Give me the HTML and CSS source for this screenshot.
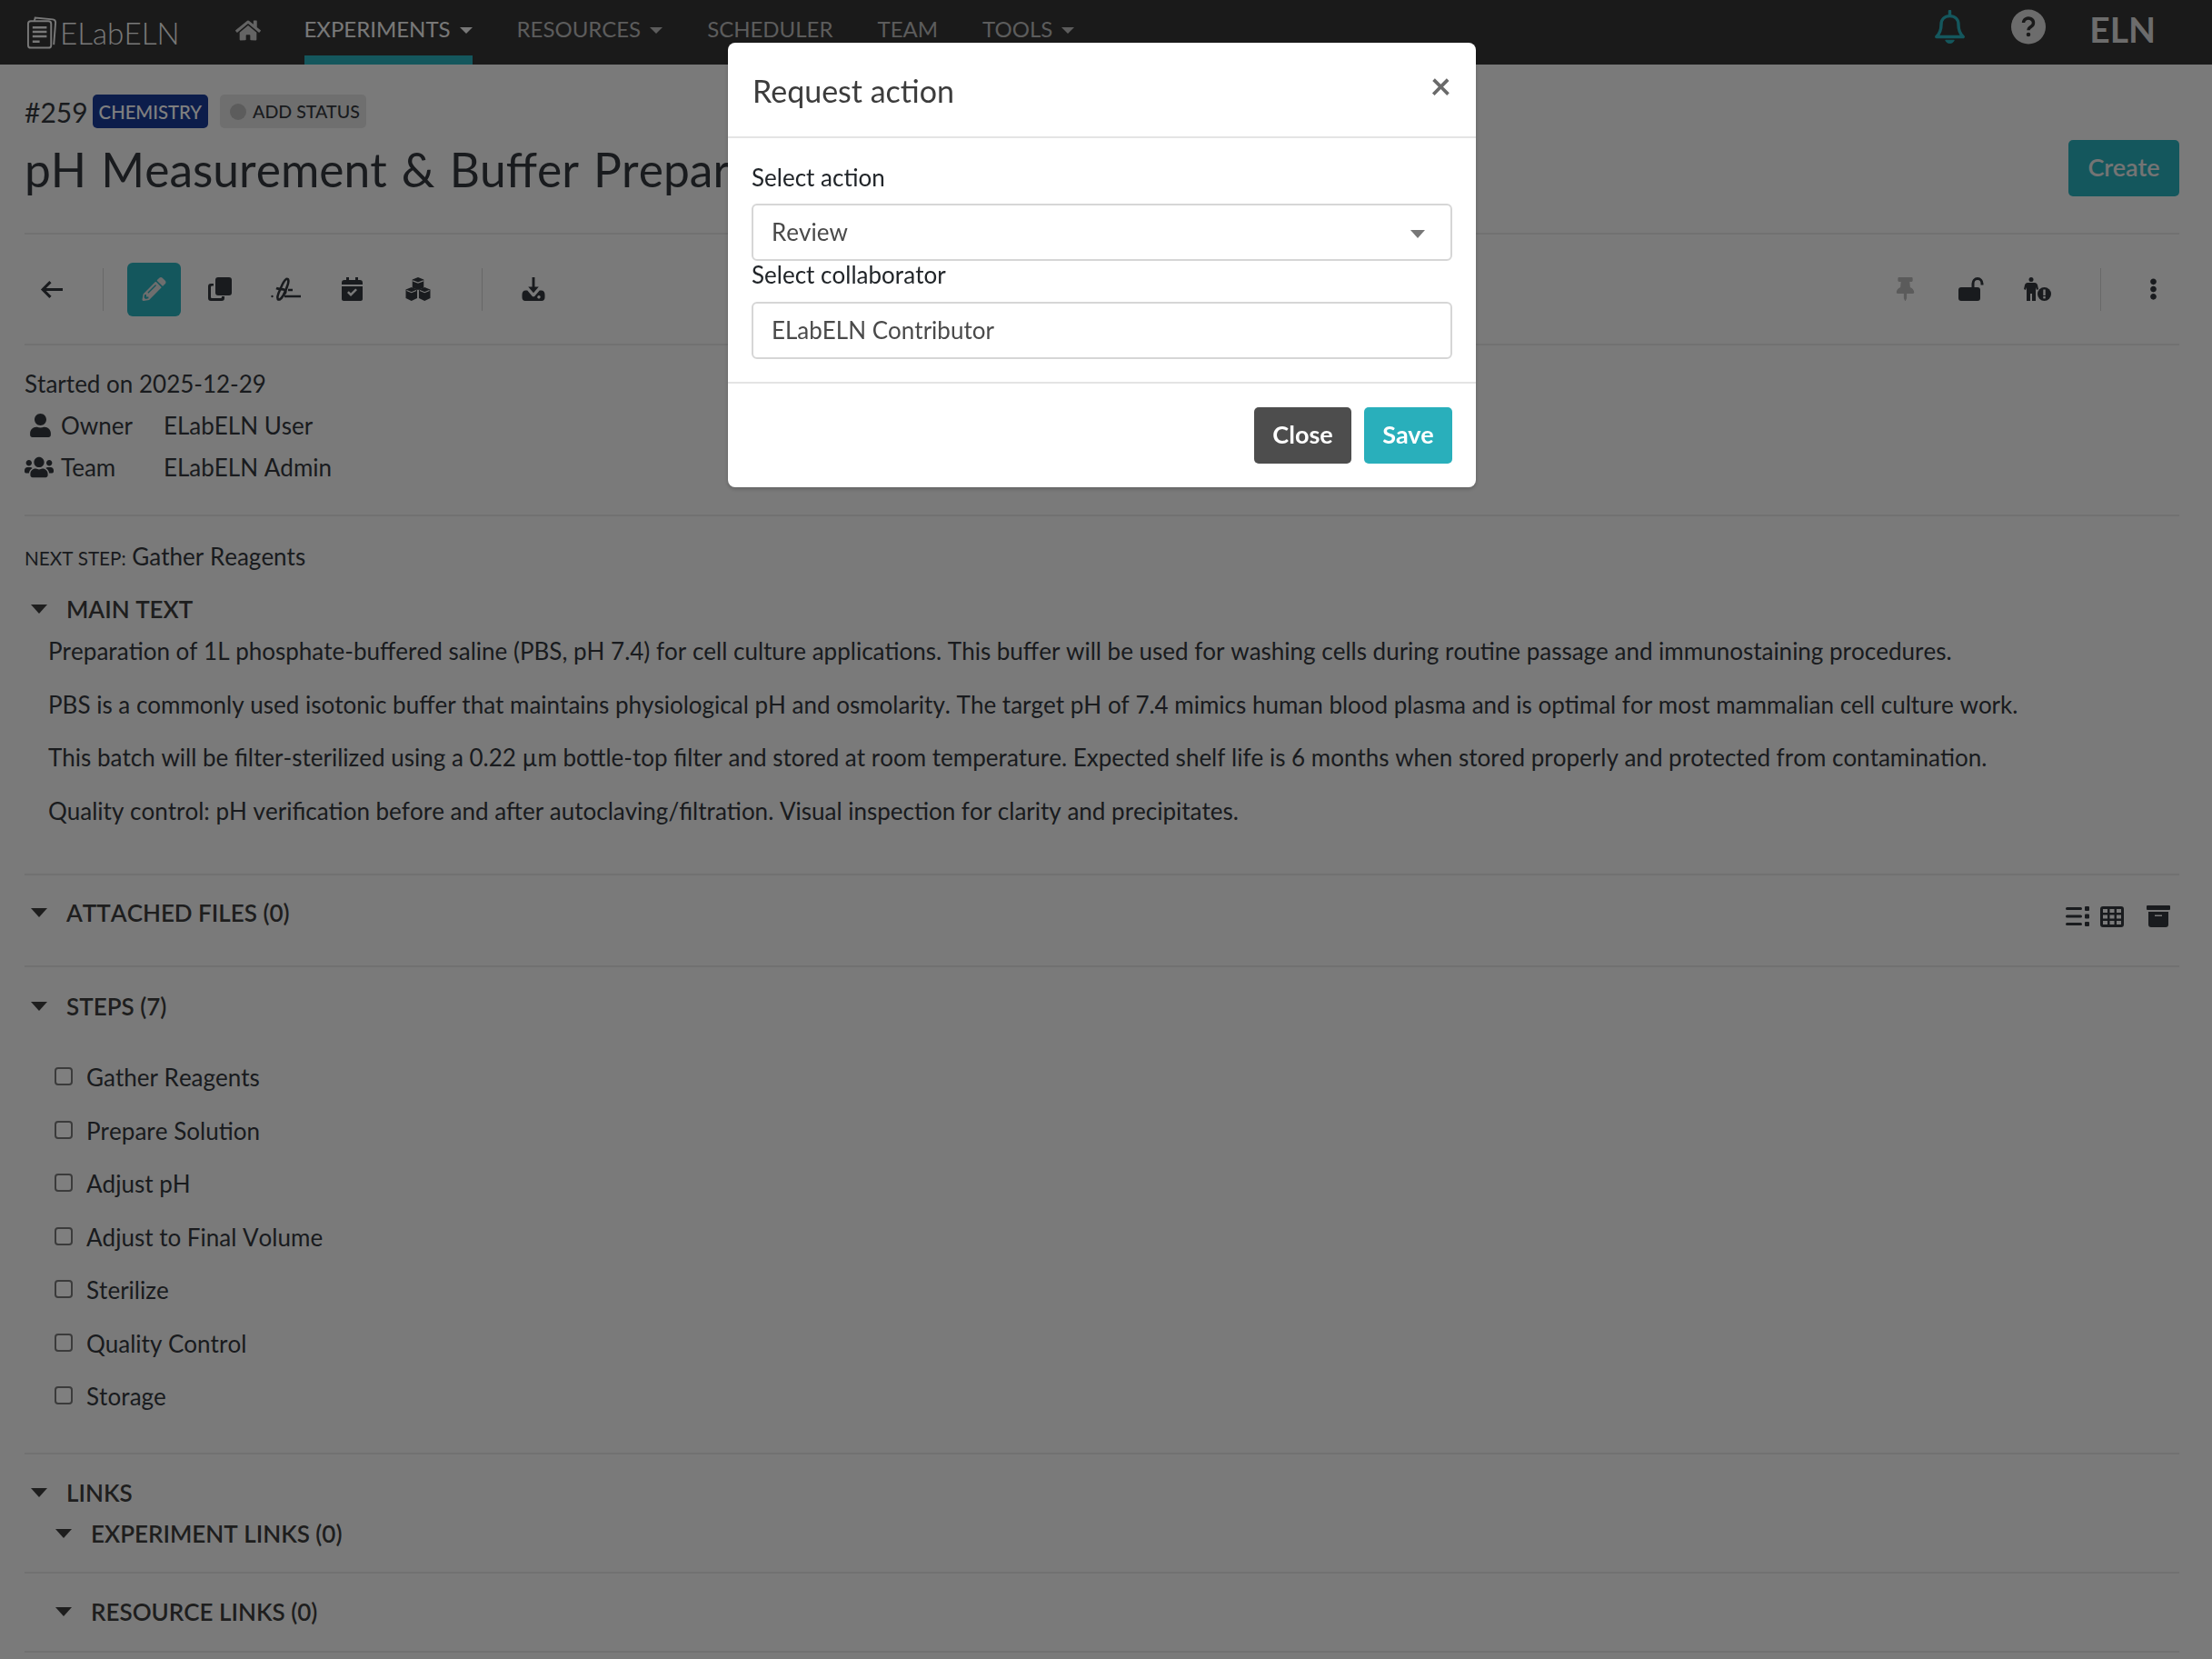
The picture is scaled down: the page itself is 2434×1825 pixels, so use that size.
FILE: index.html
```html
<!DOCTYPE html>
<html lang="en">
<head>
    <meta charset="UTF-8">
    <title>pH Measurement &amp; Buffer Preparation - ELabELN</title>
    <link rel="stylesheet" href="styles.css">
</head>
<body>

<!-- Top navigation -->
<nav class="navbar">
    <a class="brand">
        <svg class="brand-logo line" viewBox="0 0 38 38" stroke="currentColor" stroke-width="2">
            <path d="M9 6l1-4 20 2c2 .3 3 1.500 3 3.500l-2 25"/>
            <rect x="2" y="6" width="26" height="30" rx="3"/>
            <path d="M7 13h16M7 18h16M7 23h16M7 29h8" stroke-width="2.600"/>
        </svg>
        <span>ELabELN</span>
    </a>
    <svg class="nav-home" viewBox="0 0 576 512"><path d="M280.37 148.26L96 300.11V464a16 16 0 0 0 16 16l112.06-.29a16 16 0 0 0 15.92-16V368a16 16 0 0 1 16-16h64a16 16 0 0 1 16 16v95.64a16 16 0 0 0 16 16.05L464 480a16 16 0 0 0 16-16V300L295.67 148.26a12.19 12.19 0 0 0-15.3 0zM571.6 251.47L488 182.56V44.05a12 12 0 0 0-12-12h-56a12 12 0 0 0-12 12v72.61L318.47 43a48 48 0 0 0-61 0L4.34 251.47a12 12 0 0 0-1.6 16.9l25.5 31A12 12 0 0 0 45.15 301l235.22-193.74a12.19 12.19 0 0 1 15.3 0L530.9 301a12 12 0 0 0 16.9-1.6l25.5-31a12 12 0 0 0-1.7-16.93z"/></svg>
    <ul class="nav-links">
        <li class="nav-item active has-caret">EXPERIMENTS</li>
        <li class="nav-item has-caret">RESOURCES</li>
        <li class="nav-item">SCHEDULER</li>
        <li class="nav-item">TEAM</li>
        <li class="nav-item has-caret">TOOLS</li>
    </ul>
    <div class="nav-right">
        <svg class="nav-bell line" viewBox="0 0 36 40" stroke="currentColor" stroke-width="3.600" stroke-linejoin="round">
            <path d="M2.500 31c4-4 5.500-8 5.500-14 0-6 4-10 10-10s10 4 10 10c0 6 1.500 10 5.500 14z"/>
            <path d="M18 1.500v5" stroke-linecap="round"/>
            <path d="M13 35c1 4.500 9 4.500 10 0z" fill="currentColor" stroke-width="1"/>
        </svg>
        <svg class="nav-help" viewBox="0 0 38 38">
            <circle cx="19" cy="19" r="19"/>
            <path class="help-mark" d="M13.500 14.500a5.500 5 0 1 1 8.500 4.200c-2 1.300-3 2-3 4"/>
            <circle class="help-dot" cx="19" cy="27.500" r="2.300"/>
        </svg>
        <span class="nav-team">ELN</span>
    </div>
</nav>

<main class="content">
    <header class="title-row">
        <div>
            <div class="id-row">
                <span class="exp-id">#259</span>
                <span class="badge badge-category">CHEMISTRY</span>
                <span class="badge badge-status"><i class="status-dot"></i>ADD STATUS</span>
            </div>
            <h1 class="title">pH Measurement &amp; Buffer Preparation</h1>
        </div>
        <button class="btn btn-create">Create</button>
    </header>

    <!-- Toolbar -->
    <div class="toolbar">
        <div class="tool-group">
            <svg class="icon icon-back line" viewBox="0 0 24 20" stroke="currentColor" stroke-width="3"><path d="M24 10H3M11 2l-8 8 8 8"/></svg>
            <span class="tool-divider"></span>
            <span class="tool-active">
                <svg class="icon" viewBox="0 0 512 512"><path d="M497.9 142.1l-46.1 46.1c-4.7 4.7-12.3 4.7-17 0l-111-111c-4.7-4.7-4.7-12.3 0-17l46.1-46.1c18.7-18.7 49.1-18.7 67.9 0l60.1 60.1c18.8 18.7 18.8 49.1 0 67.9zM284.2 99.8L21.6 362.4.4 483.9c-2.9 16.4 11.4 30.6 27.8 27.8l121.5-21.3 262.6-262.6c4.7-4.7 4.7-12.3 0-17l-111-111c-4.8-4.7-12.4-4.7-17.1 0zM124.1 339.9c-5.5-5.5-5.5-14.3 0-19.8l154-154c5.5-5.5 14.3-5.5 19.8 0s5.5 14.3 0 19.8l-154 154c-5.5 5.5-14.3 5.5-19.8 0zM88 424h48v36.3l-64.5 11.3-31.1-31.1L51.7 376H88v48z"/></svg>
            </span>
            <svg class="icon icon-copy" viewBox="0 0 26 26"><rect x="8" y="0" width="18" height="20" rx="3"/><path d="M6 7v2.500H4.500c-1 0-1.500.5-1.500 1.500v10.500c0 1 .5 1.500 1.500 1.500h9c1 0 1.500-.5 1.500-1.500V21h3v2c0 2-1 3-3 3H3c-2 0-3-1-3-3V10c0-2 1-3 3-3z"/></svg>
            <svg class="icon icon-sign line" viewBox="0 0 33 26" stroke="currentColor" stroke-width="2.600"><path d="M9 25c-3-1-1.500-6 1.500-12 2-5 3.500-9 6.500-11 3-1 3 3 1 8-2 6-4.500 13-9 15"/><path d="M6 12c4 2 9 0 10 3 1 2-2 4-2 4"/><path d="M19 14h5M15 21h18"/><circle cx="1.500" cy="21" r="1.200" fill="currentColor" stroke="none"/></svg>
            <svg class="icon icon-cal" viewBox="0 0 23 26"><path d="M5 0h3v3h7V0h3v3h2c2 0 3 1 3 3v2H0V6c0-2 1-3 3-3h2z"/><path fill-rule="evenodd" d="M0 10h23v14c0 1-1 2-2 2H2c-1 0-2-1-2-2zm6 7l4 4 7-7-1.800-1.600L10 17.500 7.800 15.300z"/></svg>
            <svg class="icon icon-cubes" viewBox="0 0 30 27"><path d="M15 0l6.500 2.500V12L15 14.500 8.500 12V2.500z"/><path d="M7.500 11.500L14 14v10l-6.500 3L1 24V14z"/><path d="M22.500 11.500L29 14v10l-6.500 3L16 24V14z"/><path d="M9 4l6 2.300 6-2.300M2 15l5.500 2.300L13 15M17 15l5.500 2.300L28 15" fill="none" stroke="#f5f5f5" stroke-width="1.200"/></svg>
            <span class="tool-divider tool-divider-second"></span>
            <svg class="icon icon-down" viewBox="0 0 26 27"><path d="M11.500 0h3v11h4.500L13 18l-6-7h4.500z"/><path fill-rule="evenodd" d="M6 15l6 7h2l6-7h2c2.500 0 4 2 4 5v3c0 2-1.500 4-3.500 4h-19C1.500 27 0 25 0 23v-3c0-3 1.500-5 4-5zm15 7.500a1.800 1.800 0 1 0 0 .01z"/></svg>
        </div>
        <div class="tool-group">
            <svg class="icon icon-pin" viewBox="0 0 384 512"><path d="M298.028 214.267L285.793 96H328c13.255 0 24-10.745 24-24V24c0-13.255-10.745-24-24-24H56C42.745 0 32 10.745 32 24v48c0 13.255 10.745 24 24 24h42.207L85.972 214.267C37.465 236.82 0 277.261 0 328c0 13.255 10.745 24 24 24h136v104.007c0 1.242.289 2.467.845 3.578l24 48c2.941 5.882 11.364 5.893 14.311 0l24-48a8.008 8.008 0 0 0 .845-3.578V352h136c13.255 0 24-10.745 24-24-.001-51.183-37.983-91.42-85.973-113.733z"/></svg>
            <svg class="icon icon-unlock" viewBox="0 0 30 26"><rect x="0" y="11" width="24" height="15" rx="3"/><path d="M16 12V7c0-3 2-5.500 5-5.500s5 2.500 5 5.500v1.500" fill="none" stroke="currentColor" stroke-width="3"/></svg>
            <svg class="icon icon-warn" viewBox="0 0 30 26"><circle cx="8" cy="2.500" r="2.500"/><path d="M4 6h8c1.500 0 2.500 1 3 2.500l1 4.500-2 1-1-3v15H9v-8H7v8H3V11l-1 3-2-1 1-4.500C1.500 7 2.500 6 4 6z"/><circle cx="22.500" cy="18.500" r="7.500"/><rect x="21.300" y="13.500" width="2.400" height="6.500" fill="#f5f5f5"/><rect x="21.300" y="21" width="2.400" height="2.400" fill="#f5f5f5"/></svg>
            <span class="tool-divider tool-divider-right"></span>
            <svg class="icon icon-dots" viewBox="0 0 192 512"><path d="M96 184c39.800 0 72 32.200 72 72s-32.200 72-72 72-72-32.200-72-72 32.200-72 72-72zM24 80c0 39.800 32.200 72 72 72s72-32.200 72-72S135.800 8 96 8 24 40.200 24 80zm0 352c0 39.800 32.200 72 72 72s72-32.200 72-72-32.200-72-72-72-72 32.200-72 72z"/></svg>
        </div>
    </div>

    <!-- Metadata -->
    <section class="meta">
        <div>Started on 2025-12-29</div>
        <div class="meta-row">
            <span class="meta-label">
                <span class="meta-icon"><svg class="icon-user" viewBox="0 0 448 512"><path d="M224 256c70.700 0 128-57.300 128-128S294.700 0 224 0 96 57.300 96 128s57.300 128 128 128zm89.600 32h-16.700c-22.200 10.200-46.900 16-72.900 16s-50.600-5.800-72.900-16h-16.700C60.200 288 0 348.200 0 422.400V464c0 26.500 21.500 48 48 48h352c26.500 0 48-21.500 48-48v-41.600c0-74.200-60.200-134.400-134.400-134.400z"/></svg></span>
                Owner
            </span>
            <span>ELabELN User</span>
        </div>
        <div class="meta-row">
            <span class="meta-label">
                <span class="meta-icon"><svg class="icon-users" viewBox="0 0 640 512"><path d="M96 224c35.300 0 64-28.700 64-64s-28.700-64-64-64-64 28.700-64 64 28.700 64 64 64zm448 0c35.300 0 64-28.700 64-64s-28.700-64-64-64-64 28.700-64 64 28.700 64 64 64zm32 32h-64c-17.600 0-33.500 7.100-45.100 18.600 40.300 22.100 68.900 62 75.100 109.400h66c17.700 0 32-14.300 32-32v-32c0-35.300-28.700-64-64-64zm-256 0c61.900 0 112-50.100 112-112S381.900 32 320 32 208 82.100 208 144s50.100 112 112 112zm76.800 32h-8.300c-20.800 10-43.900 16-68.500 16s-47.600-6-68.500-16h-8.300C179.600 288 128 339.600 128 403.200V432c0 26.500 21.500 48 48 48h288c26.500 0 48-21.500 48-48v-28.800c0-63.600-51.600-115.200-115.200-115.200zm-223.700-13.400C161.500 263.100 145.600 256 128 256H64c-35.300 0-64 28.700-64 64v32c0 17.700 14.300 32 32 32h65.900c6.300-47.400 34.900-87.300 75.200-109.400z"/></svg></span>
                Team
            </span>
            <span>ELabELN Admin</span>
        </div>
    </section>

    <section class="main-text">
        <div class="next-step"><span class="next-label">NEXT STEP:</span> Gather Reagents</div>
        <h2 class="section-title"><i class="caret"></i>MAIN TEXT</h2>
        <div class="body-text">
            <p>Preparation of 1L phosphate-buffered saline (PBS, pH 7.4) for cell culture applications. This buffer will be used for washing cells during routine passage and immunostaining procedures.</p>
            <p>PBS is a commonly used isotonic buffer that maintains physiological pH and osmolarity. The target pH of 7.4 mimics human blood plasma and is optimal for most mammalian cell culture work.</p>
            <p>This batch will be filter-sterilized using a 0.22 µm bottle-top filter and stored at room temperature. Expected shelf life is 6 months when stored properly and protected from contamination.</p>
            <p>Quality control: pH verification before and after autoclaving/filtration. Visual inspection for clarity and precipitates.</p>
        </div>
    </section>

    <section class="files">
        <h2 class="section-title"><i class="caret"></i>ATTACHED FILES (0)</h2>
        <div class="file-tools">
            <svg class="icon-list" viewBox="0 0 26 22"><rect x="0" y="1" width="18" height="3" rx="1.500"/><rect x="0" y="9.500" width="18" height="3" rx="1.500"/><rect x="0" y="18" width="18" height="3" rx="1.500"/><rect x="21" y="0" width="5" height="5" rx="1"/><rect x="21" y="8.500" width="5" height="5" rx="1"/><rect x="21" y="17" width="5" height="5" rx="1"/></svg>
            <svg class="icon-table" viewBox="0 0 26 23"><path fill-rule="evenodd" d="M3 0h20c2 0 3 1 3 3v17c0 2-1 3-3 3H3c-2 0-3-1-3-3V3c0-2 1-3 3-3zm0 3v4h5V3zm7.500 0v4h5V3zM18 3v4h5V3zM3 9.500v4h5v-4zm7.500 0v4h5v-4zm7.500 0v4h5v-4zM3 16v4h5v-4zm7.500 0v4h5v-4zm7.500 0v4h5v-4z"/></svg>
            <svg class="icon-archive" viewBox="0 0 26 24"><rect x="0" y="0" width="26" height="5" rx="1"/><path fill-rule="evenodd" d="M2 7h22v14c0 2-1 3-3 3H5c-2 0-3-1-3-3zm7 3.500v1.500h8v-1.500z"/></svg>
        </div>
    </section>

    <section class="steps">
        <h2 class="section-title"><i class="caret"></i>STEPS (7)</h2>
        <ul class="step-list">
            <li><i class="checkbox"></i>Gather Reagents</li>
            <li><i class="checkbox"></i>Prepare Solution</li>
            <li><i class="checkbox"></i>Adjust pH</li>
            <li><i class="checkbox"></i>Adjust to Final Volume</li>
            <li><i class="checkbox"></i>Sterilize</li>
            <li><i class="checkbox"></i>Quality Control</li>
            <li><i class="checkbox"></i>Storage</li>
        </ul>
    </section>

    <section class="links">
        <h2 class="section-title"><i class="caret"></i>LINKS</h2>
        <div class="link-block">
            <h3 class="section-title sub-title"><i class="caret"></i>EXPERIMENT LINKS (0)</h3>
        </div>
        <div class="link-block link-block-second">
            <h3 class="section-title sub-title"><i class="caret"></i>RESOURCE LINKS (0)</h3>
        </div>
    </section>
</main>

<!-- Modal -->
<div class="backdrop"></div>
<div class="modal-wrap">
    <div class="modal">
        <div class="modal-header">
            <h5 class="modal-title">Request action</h5>
            <span class="modal-close">&times;</span>
        </div>
        <div class="modal-body">
            <label class="field-label">Select action</label>
            <div class="field field-select">Review<i class="field-caret"></i></div>
            <label class="field-label">Select collaborator</label>
            <div class="field">ELabELN Contributor</div>
        </div>
        <div class="modal-footer">
            <button class="btn btn-close">Close</button>
            <button class="btn btn-save">Save</button>
        </div>
    </div>
</div>

</body>
</html>
```

FILE: styles.css
```css
* {
    box-sizing: border-box;
}
html, body {
    height: 1825px;
    overflow: hidden;
}
body {
    margin: 0;
    font-family: Lato, "Open Sans", sans-serif;
    font-size: 26px;
    font-kerning: none;
    line-height: 40px;
    color: #33373c;
    background-color: #f5f5f5;
}
h1, h2, h3, h5, p, ul {
    margin: 0;
    padding: 0;
}
svg {
    fill: currentColor;
    display: block;
}
svg.line {
    fill: none;
}

/* navbar */
.navbar {
    display: flex;
    align-items: stretch;
    height: 71px;
    padding-left: 29px;
    background-color: #343434;
    color: #dcdcdc;
}
.brand {
    display: flex;
    align-items: center;
    font-size: 33.2px;
    font-weight: 300;
    color: #f0f0f0;
    padding-top: 1px;
}
.brand-logo {
    width: 37px;
    height: 38px;
}
.nav-home {
    width: 28px;
    height: 25px;
    margin: 21px 48px 0 61px;
    color: #c8c8c8;
}
.nav-links {
    display: flex;
    gap: 49px;
    list-style: none;
    font-size: 24px;
    font-kerning: normal;
}
.nav-item {
    height: 71px;
    padding-top: 12px;
    color: #b8b8b8;
}
.nav-item.active {
    color: #f0f0f0;
    border-bottom: 10px solid #29afbb;
}
.has-caret::after {
    content: "";
    display: inline-block;
    margin-left: 10px;
    vertical-align: 4px;
    border-top: 7px solid currentColor;
    border-left: 7px solid transparent;
    border-right: 7px solid transparent;
}
.nav-right {
    display: flex;
    margin-left: auto;
    padding-right: 62px;
}
.nav-bell {
    width: 35px;
    height: 38px;
    margin: 11px 50px 0 0;
    color: #29afbb;
}
.nav-help {
    width: 38px;
    height: 39px;
    margin: 10px 48px 0 0;
    color: #d8d8d8;
}
.help-mark {
    fill: none;
    stroke: #343434;
    stroke-width: 3.4;
}
.help-dot {
    fill: #343434;
}
.nav-team {
    font-size: 39px;
    font-weight: 700;
    font-kerning: normal;
    line-height: 64px;
    color: #d8d8d8;
}

/* page */
.content {
    padding: 0 36px 0 27px;
}
.title-row {
    display: flex;
    justify-content: space-between;
    height: 187px;
    padding-top: 33px;
    border-bottom: 2px solid #e2e2e2;
}
.id-row {
    display: flex;
    align-items: center;
    height: 37px;
    font-size: 30px;
    font-kerning: normal;
}
.exp-id {
    margin-right: 5px;
}
.badge {
    display: flex;
    align-items: center;
    height: 37px;
    padding: 0 7px;
    border-radius: 5px;
    font-size: 20.3px;
    font-weight: 500;
}
.badge-category {
    background-color: #183a96;
    color: #fff;
}
.badge-status {
    margin-left: 13px;
    padding: 0 7px 0 11px;
    background-color: #dfdfdf;
    font-size: 19.6px;
}
.status-dot {
    width: 18px;
    height: 18px;
    margin-right: 7px;
    border-radius: 50%;
    background-color: #b8b8b8;
}
.title {
    margin-top: 15px;
    font-size: 51.5px;
    font-weight: 400;
    font-kerning: none;
    word-spacing: 3px;
    line-height: 60px;
    white-space: nowrap;
}
.btn {
    border: 0;
    border-radius: 5px;
    padding: 0 0 3px;
    font-family: inherit;
    font-size: 27px;
    font-weight: 700;
    font-kerning: normal;
    color: #fff;
}
.btn-create {
    width: 122px;
    height: 62px;
    margin-top: 50px;
    background-color: #29afbb;
    font-weight: 600;
    color: #e8e8e8;
}

/* toolbar */
.toolbar {
    display: flex;
    justify-content: space-between;
    align-items: center;
    height: 122px;
    padding-top: 0;
    border-bottom: 2px solid #e2e2e2;
}
.tool-group {
    display: flex;
    align-items: center;
}
.icon {
    height: 26px;
    flex: none;
}
.icon-back {
    width: 25px;
    height: 21px;
    margin-left: 17px;
}
.tool-divider {
    width: 1px;
    height: 47px;
    margin: 0 26px 0 44px;
    background-color: #d0d0d0;
}
.tool-active {
    display: flex;
    align-items: center;
    justify-content: center;
    width: 59px;
    height: 59px;
    border-radius: 6px;
    background-color: #29afbb;
    color: #dcdcdc;
}
.tool-active .icon {
    width: 27px;
}
.icon-copy {
    width: 26px;
    margin-left: 30px;
}
.icon-sign {
    width: 33px;
    margin-left: 43px;
}
.icon-cal {
    width: 23px;
    margin-left: 45px;
}
.icon-cubes {
    width: 30px;
    margin-left: 46px;
}
.tool-divider-second {
    margin: 0 43px 0 55px;
}
.icon-down {
    width: 26px;
}
.icon-pin {
    width: 21px;
    color: #b6b6b6;
}
.icon-unlock {
    width: 30px;
    margin-left: 48px;
}
.icon-warn {
    width: 30px;
    margin-left: 42px;
}
.tool-divider-right {
    margin: 0 53px 0 54px;
}
.icon-dots {
    width: 9px;
    margin-right: 24px;
}

/* metadata */
.meta {
    height: 188px;
    padding-top: 22px;
    border-bottom: 2px solid #e2e2e2;
}
.meta-row {
    display: flex;
    margin-top: 6px;
}
.meta-label {
    display: flex;
    align-items: center;
    width: 153px;
    font-kerning: normal;
}
.meta-icon {
    display: flex;
    justify-content: center;
    width: 32px;
    margin-right: 8px;
}
.icon-user {
    width: 23px;
    height: 26px;
    margin-left: 3px;
}
.icon-users {
    width: 32px;
    height: 26px;
}

/* sections */
.main-text {
    height: 395px;
    padding-top: 24px;
    border-bottom: 2px solid #e2e2e2;
}
.next-step {
    height: 40px;
}
.next-label {
    font-size: 20.7px;
}
.section-title {
    display: flex;
    align-items: center;
    font-size: 26px;
    font-weight: 600;
    line-height: 40px;
    color: #3c3c3c;
}
.main-text .section-title {
    margin-top: 18px;
}
.caret {
    width: 0;
    height: 0;
    margin: 0 21px 0 7px;
    border-top: 10px solid currentColor;
    border-left: 9px solid transparent;
    border-right: 9px solid transparent;
}
.body-text {
    margin-top: 6px;
    padding-left: 26px;
}
.body-text p {
    margin-bottom: 18.500px;
    white-space: nowrap;
}
.files {
    position: relative;
    height: 101px;
    padding-top: 21px;
    border-bottom: 2px solid #e2e2e2;
}
.file-tools {
    position: absolute;
    top: 33px;
    right: 10px;
    display: flex;
    align-items: center;
}
.icon-list {
    width: 26px;
    height: 22px;
}
.icon-table {
    width: 26px;
    height: 23px;
    margin-left: 12px;
}
.icon-archive {
    width: 26px;
    height: 24px;
    margin-left: 25px;
}
.steps {
    height: 536px;
    padding-top: 23px;
    border-bottom: 2px solid #e2e2e2;
}
.step-list {
    margin-top: 38px;
    list-style: none;
}
.step-list li {
    display: flex;
    align-items: center;
    height: 40px;
    margin-bottom: 18.500px;
    padding-left: 33px;
}
.checkbox {
    width: 20px;
    height: 20px;
    margin: -2px 15px 0 0;
    border: 2px solid #767676;
    border-radius: 4px;
    background-color: #fff;
}
.links {
    padding-top: 22px;
}
.sub-title {
    padding-left: 27px;
}
.link-block {
    height: 69px;
    padding-top: 5px;
    border-bottom: 2px solid #e2e2e2;
}
.link-block-second {
    height: 87px;
    padding-top: 22px;
}

/* modal */
.backdrop {
    position: fixed;
    inset: 0;
    background-color: #000;
    opacity: .5;
}
.modal-wrap {
    position: fixed;
    inset: 0;
    display: flex;
    justify-content: center;
    align-items: flex-start;
    padding: 47px 9px 0 0;
    color: #212529;
}
.modal {
    width: 823px;
    border-radius: 8px;
    background-color: #fff;
    box-shadow: 0 2px 4px rgba(0, 0, 0, .2);
}
.modal-header {
    display: flex;
    justify-content: space-between;
    height: 105px;
    padding: 29px 27px 0;
    border-bottom: 2px solid #e4e4e4;
}
.modal-title {
    font-size: 34px;
    font-weight: 400;
    font-kerning: normal;
    line-height: 48px;
    color: #3c3c3c;
}
.modal-close {
    margin-top: -6px;
    font-size: 40px;
    font-weight: 700;
    line-height: 48px;
    color: #6a6a6a;
}
.modal-body {
    height: 270px;
    padding: 23px 26px 0;
    border-bottom: 2px solid #e4e4e4;
}
.field-label {
    display: block;
    height: 49px;
    line-height: 40px;
}
.field {
    position: relative;
    height: 63px;
    padding-left: 20px;
    border: 2px solid #d6d6d6;
    border-radius: 6px;
    line-height: 58px;
    color: #4a4a4a;
}
.field-label + .field + .field-label {
    height: 45px;
    line-height: 31px;
}
.field-caret {
    position: absolute;
    top: 27px;
    right: 28px;
    border-top: 9px solid #777;
    border-left: 8px solid transparent;
    border-right: 8px solid transparent;
}
.modal-footer {
    display: flex;
    justify-content: flex-end;
    gap: 14px;
    padding: 26px 26px;
}
.btn-close {
    width: 107px;
    height: 62px;
    background-color: #4d4d4d;
}
.btn-save {
    width: 97px;
    height: 62px;
    background-color: #29afbb;
}
```
